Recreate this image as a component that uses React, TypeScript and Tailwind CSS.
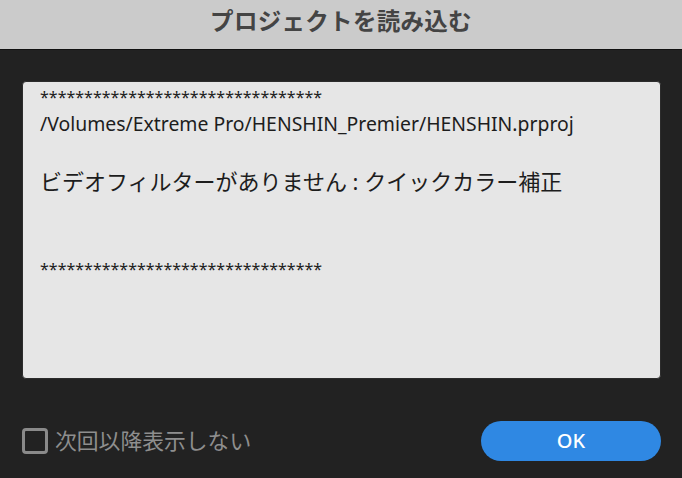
const stars = "*".repeat(32);

export default function App() {
  return (
    <div
      className="w-[682px] h-[478px] flex flex-col bg-[#222222] overflow-hidden"
      style={{ fontFamily: '"Noto Sans", "Noto Sans CJK JP", sans-serif' }}
    >
      {/* title bar */}
      <div className="h-[50px] shrink-0 flex items-center justify-center bg-[#cbcbcb] border-b border-[#111]">
        <h1 className="text-[23.5px] font-bold text-[#444] tracking-[0.3px] -mt-[6px]">
          プロジェクトを読み込む
        </h1>
      </div>

      {/* message box */}
      <div className="flex-1 flex flex-col pl-[22px] pr-[21px] pt-[31px]">
        <div className="h-[298px] rounded-[4px] bg-[#e6e6e6] border border-[#2c2c2c] px-[17px] pt-[3px] text-[#1d1d1d]">
          <div className="text-[16px] leading-[24px]">{stars}</div>
          <div className="text-[19.4px] leading-[30px]">
            /Volumes/Extreme Pro/HENSHIN_Premier/HENSHIN.prproj
          </div>
          <div className="text-[22px] leading-[32px] mt-[26px]">
            ビデオフィルターがありません : クイックカラー補正
          </div>
          <div className="text-[16px] leading-[24px] mt-[60px]">{stars}</div>
        </div>

        {/* footer */}
        <div className="flex items-center justify-between mt-[42px]">
          <label className="flex items-center gap-[7px] text-[#8e8e8e] text-[21.8px]">
            <span className="w-[26px] h-[26px] rounded-[4px] border-[3px] border-[#8a8a8a]" />
            次回以降表示しない
          </label>
          <button className="w-[180px] h-[40px] rounded-full bg-[#2f88e3] text-white text-[20px] font-medium">
            OK
          </button>
        </div>
      </div>
    </div>
  );
}
